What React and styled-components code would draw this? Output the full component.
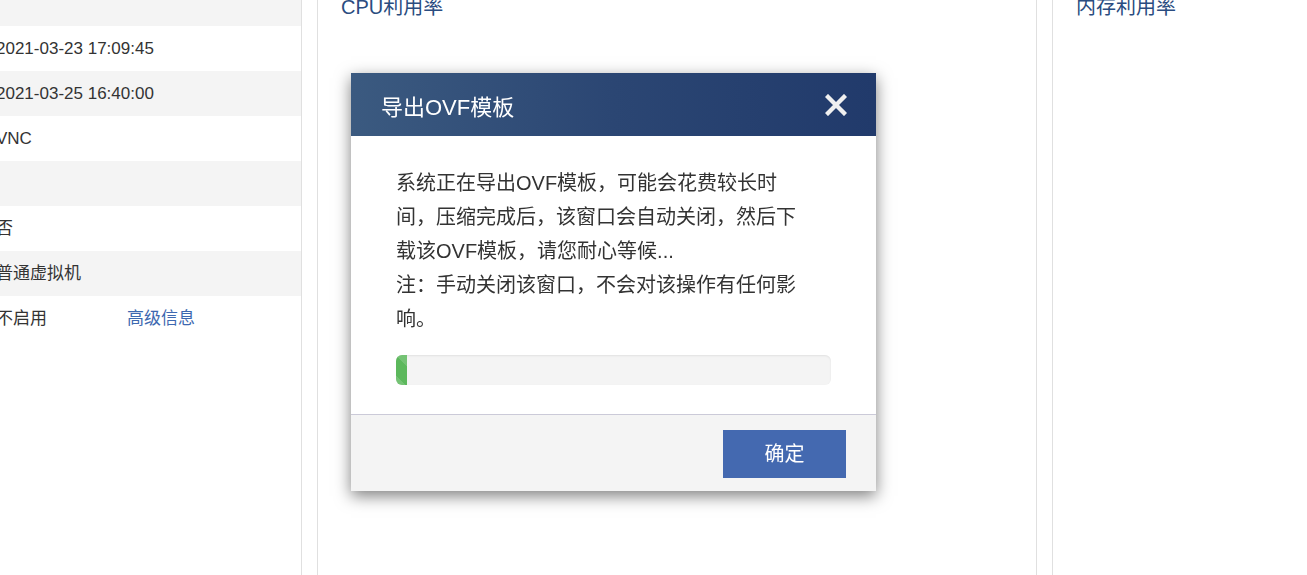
import React from "react";
import styled, { createGlobalStyle } from "styled-components";

const GlobalStyle = createGlobalStyle`
  html, body {
    margin: 0;
    padding: 0;
    background: #fff;
    overflow: hidden;
  }
  body {
    font-family: "Liberation Sans", "Noto Sans CJK SC", sans-serif;
    color: #333;
  }
`;

const Page = styled.div`
  display: flex;
  align-items: stretch;
  gap: 15px;
  height: 620px;
  margin-top: -19px;
`;

const InfoPanel = styled.div`
  width: 301px;
  flex-shrink: 0;
  border-right: 1px solid #e0e0e0;
  overflow: hidden;
`;

const InfoTable = styled.div`
  margin-left: -4px;
`;

const Row = styled.div`
  display: grid;
  grid-template-columns: 131px 1fr;
  height: 45px;
  line-height: 45px;
  font-size: 17px;
  background: ${props => (props.striped ? "#f4f4f4" : "#fff")};
`;

const Cell = styled.span`
  white-space: nowrap;
`;

const Link = styled.a`
  color: #3d68b0;
  text-decoration: none;
  cursor: pointer;
`;

const ChartPanel = styled.div`
  flex-shrink: 0;
  width: ${props => props.width}px;
  border-left: 1px solid #e0e0e0;
  border-right: ${props => (props.closed ? "1px solid #e0e0e0" : "none")};
  padding: 16px 23px;
  box-sizing: border-box;
`;

const ChartTitle = styled.div`
  font-size: 20px;
  line-height: 20px;
  color: #2a4c80;
`;

const Modal = styled.div`
  position: fixed;
  left: 351px;
  top: 73px;
  width: 525px;
  background: #fff;
  box-shadow: 0 5px 15px rgba(0, 0, 0, 0.5);
`;

const ModalHeader = styled.div`
  height: 63px;
  display: flex;
  align-items: center;
  justify-content: space-between;
  padding: 0 29px 0 30px;
  background: linear-gradient(90deg, #3b5a80 0%, #2b4673 50%, #213a6b 100%);
`;

const ModalTitle = styled.h4`
  margin: 0;
  font-size: 22px;
  font-weight: normal;
  color: #fff;
`;

const CloseButton = styled.button`
  width: 22px;
  height: 22px;
  padding: 0;
  border: none;
  background: none;
  cursor: pointer;
  display: flex;
  align-items: center;
  justify-content: center;
`;

const ModalBody = styled.div`
  padding: 30px 45px 29px;
`;

const Message = styled.p`
  margin: 0 25px 19px 0;
  font-size: 20px;
  line-height: 34px;
  color: #333;
`;

const Progress = styled.div`
  height: 30px;
  border-radius: 6px;
  background: #f4f4f4;
  box-shadow: inset 0 1px 2px rgba(0, 0, 0, 0.08);
  overflow: hidden;
`;

const ProgressBar = styled.div`
  height: 100%;
  background-color: #5cb85c;
  background-image: linear-gradient(
    45deg,
    rgba(255, 255, 255, 0.15) 25%,
    transparent 25%,
    transparent 50%,
    rgba(255, 255, 255, 0.15) 50%,
    rgba(255, 255, 255, 0.15) 75%,
    transparent 75%,
    transparent
  );
  background-size: 40px 40px;
`;

const ModalFooter = styled.div`
  display: flex;
  justify-content: flex-end;
  padding: 15px 30px 13px;
  background: #f4f4f4;
  border-top: 1px solid #cbcad8;
`;

const PrimaryButton = styled.button`
  width: 123px;
  height: 48px;
  padding: 0 0 3px;
  border: none;
  background: #4469b0;
  color: #fff;
  font-family: "Liberation Sans", "Noto Sans CJK SC", sans-serif;
  font-size: 20px;
  cursor: pointer;
`;

const rows = [
  { value: "" },
  { value: "2021-03-23 17:09:45" },
  { value: "2021-03-25 16:40:00" },
  { value: "VNC" },
  { value: "" },
  { value: "否" },
  { value: "普通虚拟机" },
  { value: "不启用", link: "高级信息" }
];

const CloseIcon = () => (
  <svg width="22" height="22" viewBox="0 0 22 22">
    <path
      d="M3 3 L19 19 M19 3 L3 19"
      stroke="#f0f0f0"
      strokeWidth="4.4"
      strokeLinecap="square"
    />
  </svg>
);

const App = () => {
  const progress = 2.5;
  return (
    <>
      <GlobalStyle />
      <Page>
        <InfoPanel>
          <InfoTable>
            {rows.map((row, idx) => (
              <Row key={idx} striped={idx % 2 === 0}>
                <Cell>{row.value}</Cell>
                <Cell>{row.link && <Link>{row.link}</Link>}</Cell>
              </Row>
            ))}
          </InfoTable>
        </InfoPanel>
        <ChartPanel width={720} closed>
          <ChartTitle>CPU利用率</ChartTitle>
        </ChartPanel>
        <ChartPanel width={300}>
          <ChartTitle>内存利用率</ChartTitle>
        </ChartPanel>
      </Page>

      <Modal>
        <ModalHeader>
          <ModalTitle>导出OVF模板</ModalTitle>
          <CloseButton>
            <CloseIcon />
          </CloseButton>
        </ModalHeader>
        <ModalBody>
          <Message>
            系统正在导出OVF模板，可能会花费较长时间，压缩完成后，该窗口会自动关闭，然后下载该OVF模板，请您耐心等候...
            <br />
            注：手动关闭该窗口，不会对该操作有任何影响。
          </Message>
          <Progress>
            <ProgressBar style={{ width: `${progress}%` }} />
          </Progress>
        </ModalBody>
        <ModalFooter>
          <PrimaryButton>确定</PrimaryButton>
        </ModalFooter>
      </Modal>
    </>
  );
};

export default App;
